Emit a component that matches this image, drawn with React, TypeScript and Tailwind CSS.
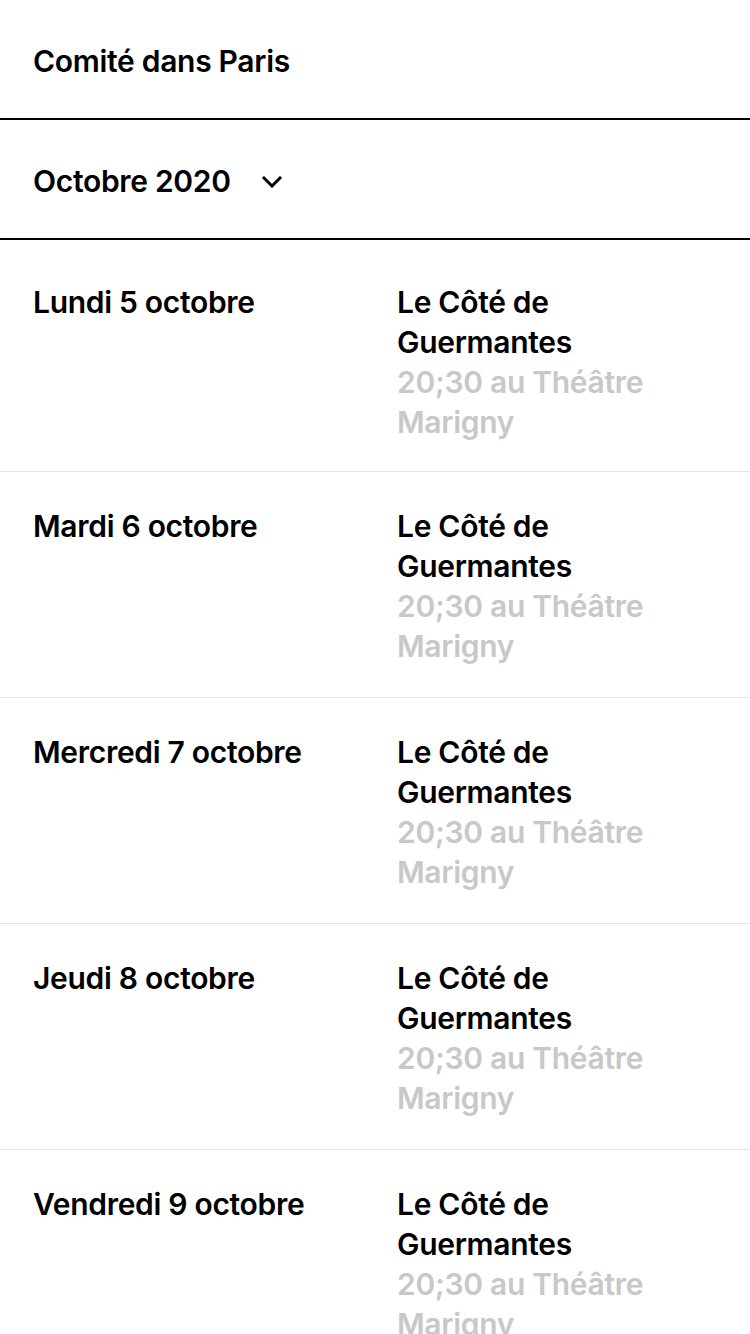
const days = [
  'Lundi 5 octobre',
  'Mardi 6 octobre',
  'Mercredi 7 octobre',
  'Jeudi 8 octobre',
  'Vendredi 9 octobre',
];

const Chevron = () => (
  <svg width="20" height="12" viewBox="0 0 20 12" fill="none" stroke="currentColor" strokeWidth="3" strokeLinecap="square">
    <polyline points="2,2 10,10 18,2" />
  </svg>
);

const EventRow = ({ day, first }: { day: string; first: boolean }) => (
  <div className={`grid grid-cols-[364px_1fr] px-[33px] border-b border-[#e3e3e3] ${first ? 'pt-[42px] pb-[29px]' : 'pt-[34px] pb-[31px]'}`}>
    <div className="text-black">{day}</div>
    <div>
      <div className="text-black">Le Côté de Guermantes</div>
      <div className="text-[#c8c8c8]">20;30 au Théâtre Marigny</div>
    </div>
  </div>
);

export default function App() {
  return (
    <div
      className="w-[750px] h-[1334px] overflow-hidden bg-white text-[30px] leading-[40px] font-semibold tracking-[-0.3px]"
      style={{ fontFamily: 'Inter, "Liberation Sans", sans-serif' }}
    >
      <div className="h-[120px] flex items-center px-[33px] pt-[4px] border-b-2 border-black">
        Comité dans Paris
      </div>
      <div className="h-[120px] flex items-center px-[33px] pt-[4px] border-b-2 border-black">
        <span>Octobre 2020</span>
        <span className="ml-[31px] mt-[2px] flex">
          <Chevron />
        </span>
      </div>
      {days.map((d, i) => (
        <EventRow key={d} day={d} first={i === 0} />
      ))}
    </div>
  );
}
